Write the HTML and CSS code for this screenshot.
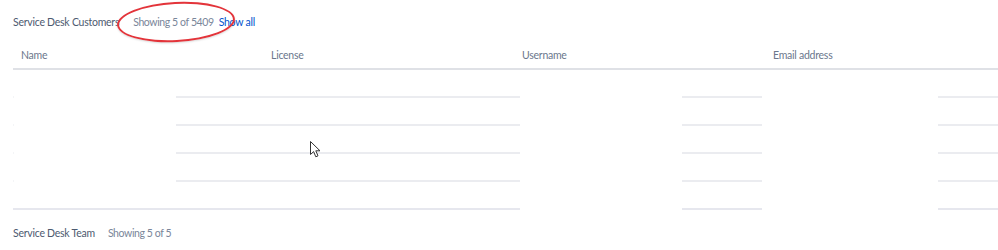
FILE: index.html
```html
<!DOCTYPE html>
<html lang="en">
<head>
    <meta charset="UTF-8">
    <title>Service Desk users</title>
    <link rel="stylesheet" href="styles.css">
</head>
<body>
    <div class="page">
        <div class="section-head">
            <span class="section-title">Service Desk Customers</span>
            <span class="count">Showing 5 of 5409</span>
            <a class="show-all" href="#">Show all</a>
            <span class="circle"></span>
        </div>

        <div class="table">
            <div class="thead">
                <div class="th">Name</div>
                <div class="th">License</div>
                <div class="th">Username</div>
                <div class="th">Email address</div>
            </div>

            <div class="row">
                <div class="cell tick"></div><div class="cell"></div><div class="cell line"></div><div class="cell"></div><div class="cell line"></div><div class="cell"></div><div class="cell line"></div>
            </div>
            <div class="row">
                <div class="cell tick"></div><div class="cell"></div><div class="cell line"></div><div class="cell"></div><div class="cell line"></div><div class="cell"></div><div class="cell line"></div>
            </div>
            <div class="row">
                <div class="cell tick"></div><div class="cell"></div><div class="cell line"></div><div class="cell"></div><div class="cell line"></div><div class="cell"></div><div class="cell line"></div>
            </div>
            <div class="row">
                <div class="cell tick"></div><div class="cell"></div><div class="cell line"></div><div class="cell"></div><div class="cell line"></div><div class="cell"></div><div class="cell line"></div>
            </div>
            <div class="row last">
                <div class="cell line"></div><div class="cell line"></div><div class="cell line"></div><div class="cell"></div><div class="cell line"></div><div class="cell"></div><div class="cell line"></div>
            </div>

            <svg class="cursor" width="12" height="18" viewBox="0 0 12 18">
                <path d="M0.5 0.5 L0.5 13.5 L3.6 10.6 L5.8 15.8 L8 14.8 L5.8 9.8 L10 9.8 Z" fill="#fff" stroke="#333" stroke-width="1" stroke-linejoin="round"/>
            </svg>
        </div>

        <div class="section-head footer">
            <span class="section-title">Service Desk Team</span>
            <span class="count">Showing 5 of 5</span>
        </div>
    </div>
</body>
</html>
```

FILE: styles.css
```css
*{
    margin: 0;
    padding: 0;
    box-sizing: border-box;
}

body{
    background-color: #fff;
    font-family: "Lato", "Open Sans", sans-serif;
    font-size: 10.5px;
    letter-spacing: -0.25px;
    color: #5e6c84;
}

.page{
    padding: 15px 0 0 13px;
}

.section-head{
    position: relative;
    display: flex;
    align-items: center;
    line-height: 14px;
}

.section-title{
    color: #4d5a70;
}

.count{
    margin-left: 14px;
    color: #7a869a;
    letter-spacing: -0.4px;
}

.show-all{
    margin-left: 5px;
    color: #0052cc;
    text-decoration: none;
}

.circle{
    position: absolute;
    left: 104px;
    top: -13px;
    width: 118px;
    height: 40px;
    border: 2px solid #e3343a;
    border-radius: 50%;
    transform: rotate(-3deg);
    box-shadow: 0 1px 2px rgba(0,0,0,0.15);
}

.table{
    position: relative;
    margin-top: 12px;
    width: 985px;
}

.thead{
    display: grid;
    grid-template-columns: 250px 251px 251px 233px;
    border-bottom: 2px solid #dfe1e6;
}

.th{
    padding: 7px 8px 6px;
    line-height: 14px;
    color: #6b778c;
}

.row{
    display: grid;
    grid-template-columns: 1px 162px 344px 162px 80px 176px 60px;
    height: 28px;
}

.cell{
    border-bottom: 2px solid transparent;
}

.cell.line{
    border-bottom-color: #ebecf0;
}

.cell.tick{
    border-bottom-color: #f4f5f7;
}

.row.last .cell.line{
    border-bottom-color: #e6e7ee;
}

.cursor{
    position: absolute;
    left: 297px;
    top: 100px;
}

.footer{
    margin-top: 16px;
}

.footer .count{
    margin-left: 13px;
}
```
